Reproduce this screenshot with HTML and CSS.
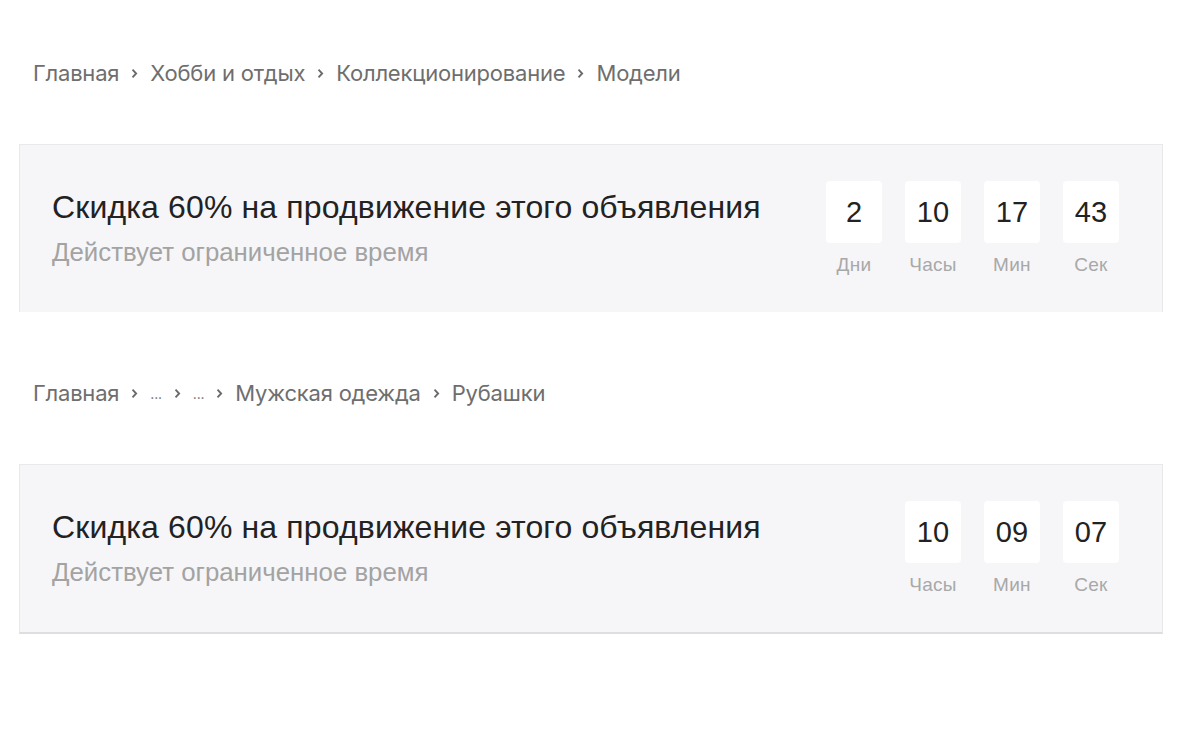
FILE: index.html
```html
<!DOCTYPE html>
<html lang="ru">
<head>
<meta charset="utf-8">
<title>Промо</title>
<link rel="stylesheet" href="styles.css">
</head>
<body>
<main class="page">
  <section class="block">
    <nav class="crumbs">
      <span>Главная</span>
      <svg class="chev" viewBox="0 0 6 10"><path d="M1.2 1.5 L4.5 5 L1.2 8.5"/></svg>
      <span>Хобби и отдых</span>
      <svg class="chev" viewBox="0 0 6 10"><path d="M1.2 1.5 L4.5 5 L1.2 8.5"/></svg>
      <span>Коллекционирование</span>
      <svg class="chev" viewBox="0 0 6 10"><path d="M1.2 1.5 L4.5 5 L1.2 8.5"/></svg>
      <span>Модели</span>
    </nav>
    <div class="card card-open">
      <div class="info">
        <div class="title">Скидка 60% на продвижение этого объявления</div>
        <div class="sub">Действует ограниченное время</div>
      </div>
      <div class="timer">
        <div class="unit"><div class="num">2</div><div class="lbl">Дни</div></div>
        <div class="unit"><div class="num">10</div><div class="lbl">Часы</div></div>
        <div class="unit"><div class="num">17</div><div class="lbl">Мин</div></div>
        <div class="unit"><div class="num">43</div><div class="lbl">Сек</div></div>
      </div>
    </div>
  </section>
  <section class="block block-second">
    <nav class="crumbs">
      <span>Главная</span>
      <svg class="chev" viewBox="0 0 6 10"><path d="M1.2 1.5 L4.5 5 L1.2 8.5"/></svg>
      <span class="dots">...</span>
      <svg class="chev" viewBox="0 0 6 10"><path d="M1.2 1.5 L4.5 5 L1.2 8.5"/></svg>
      <span class="dots">...</span>
      <svg class="chev" viewBox="0 0 6 10"><path d="M1.2 1.5 L4.5 5 L1.2 8.5"/></svg>
      <span>Мужская одежда</span>
      <svg class="chev" viewBox="0 0 6 10"><path d="M1.2 1.5 L4.5 5 L1.2 8.5"/></svg>
      <span>Рубашки</span>
    </nav>
    <div class="card card-closed">
      <div class="info">
        <div class="title">Скидка 60% на продвижение этого объявления</div>
        <div class="sub">Действует ограниченное время</div>
      </div>
      <div class="timer">
        <div class="unit"><div class="num">10</div><div class="lbl">Часы</div></div>
        <div class="unit"><div class="num">09</div><div class="lbl">Мин</div></div>
        <div class="unit"><div class="num">07</div><div class="lbl">Сек</div></div>
      </div>
    </div>
  </section>
</main>
</body>
</html>
```

FILE: styles.css
```css
html, body {
  margin: 0;
  padding: 0;
  background: #ffffff;
}

.page {
  padding: 61px 36px 0 19px;
  font-family: "Liberation Sans", Arial, sans-serif;
}

.block-second {
  margin-top: 69px;
}

.crumbs {
  display: flex;
  align-items: center;
  gap: 11px;
  padding-left: 14px;
  height: 24px;
  font-family: Inter, "Noto Sans", sans-serif;
  font-size: 22px;
  color: #6e6e6e;
  letter-spacing: -0.2px;
}

.crumbs .dots {
  font-size: 14px;
  align-self: flex-end;
  padding-bottom: 3px;
}

.chev {
  width: 7px;
  height: 11px;
  fill: none;
  stroke: #6a6a6a;
  stroke-width: 1.7;
  margin: 0 1px;
}

.card {
  margin-top: 59px;
  display: flex;
  justify-content: space-between;
  align-items: flex-start;
  background: #f6f6f8;
  border: 1px solid #e9e9ec;
  padding: 36px 43px 36px 32px;
}

.card-open {
  border-bottom: none;
  padding-bottom: 37px;
}

.card-closed {
  border-bottom: 2px solid #dedee0;
  padding-bottom: 37px;
}

.info {
  margin-top: 8px;
}

.title {
  font-size: 32px;
  line-height: 37px;
  letter-spacing: 0.14px;
  color: #222222;
}

.sub {
  margin-top: 11px;
  font-size: 25.8px;
  line-height: 30px;
  color: #a3a3a3;
}

.timer {
  display: flex;
  gap: 23px;
}

.unit {
  display: flex;
  flex-direction: column;
  align-items: center;
  width: 56px;
}

.num {
  width: 56px;
  height: 62px;
  background: #ffffff;
  border-radius: 4px;
  display: flex;
  align-items: center;
  justify-content: center;
  font-size: 29px;
  color: #222222;
}

.lbl {
  margin-top: 12px;
  font-size: 19px;
  line-height: 20px;
  letter-spacing: 0.3px;
  color: #a8a8a8;
}
```
